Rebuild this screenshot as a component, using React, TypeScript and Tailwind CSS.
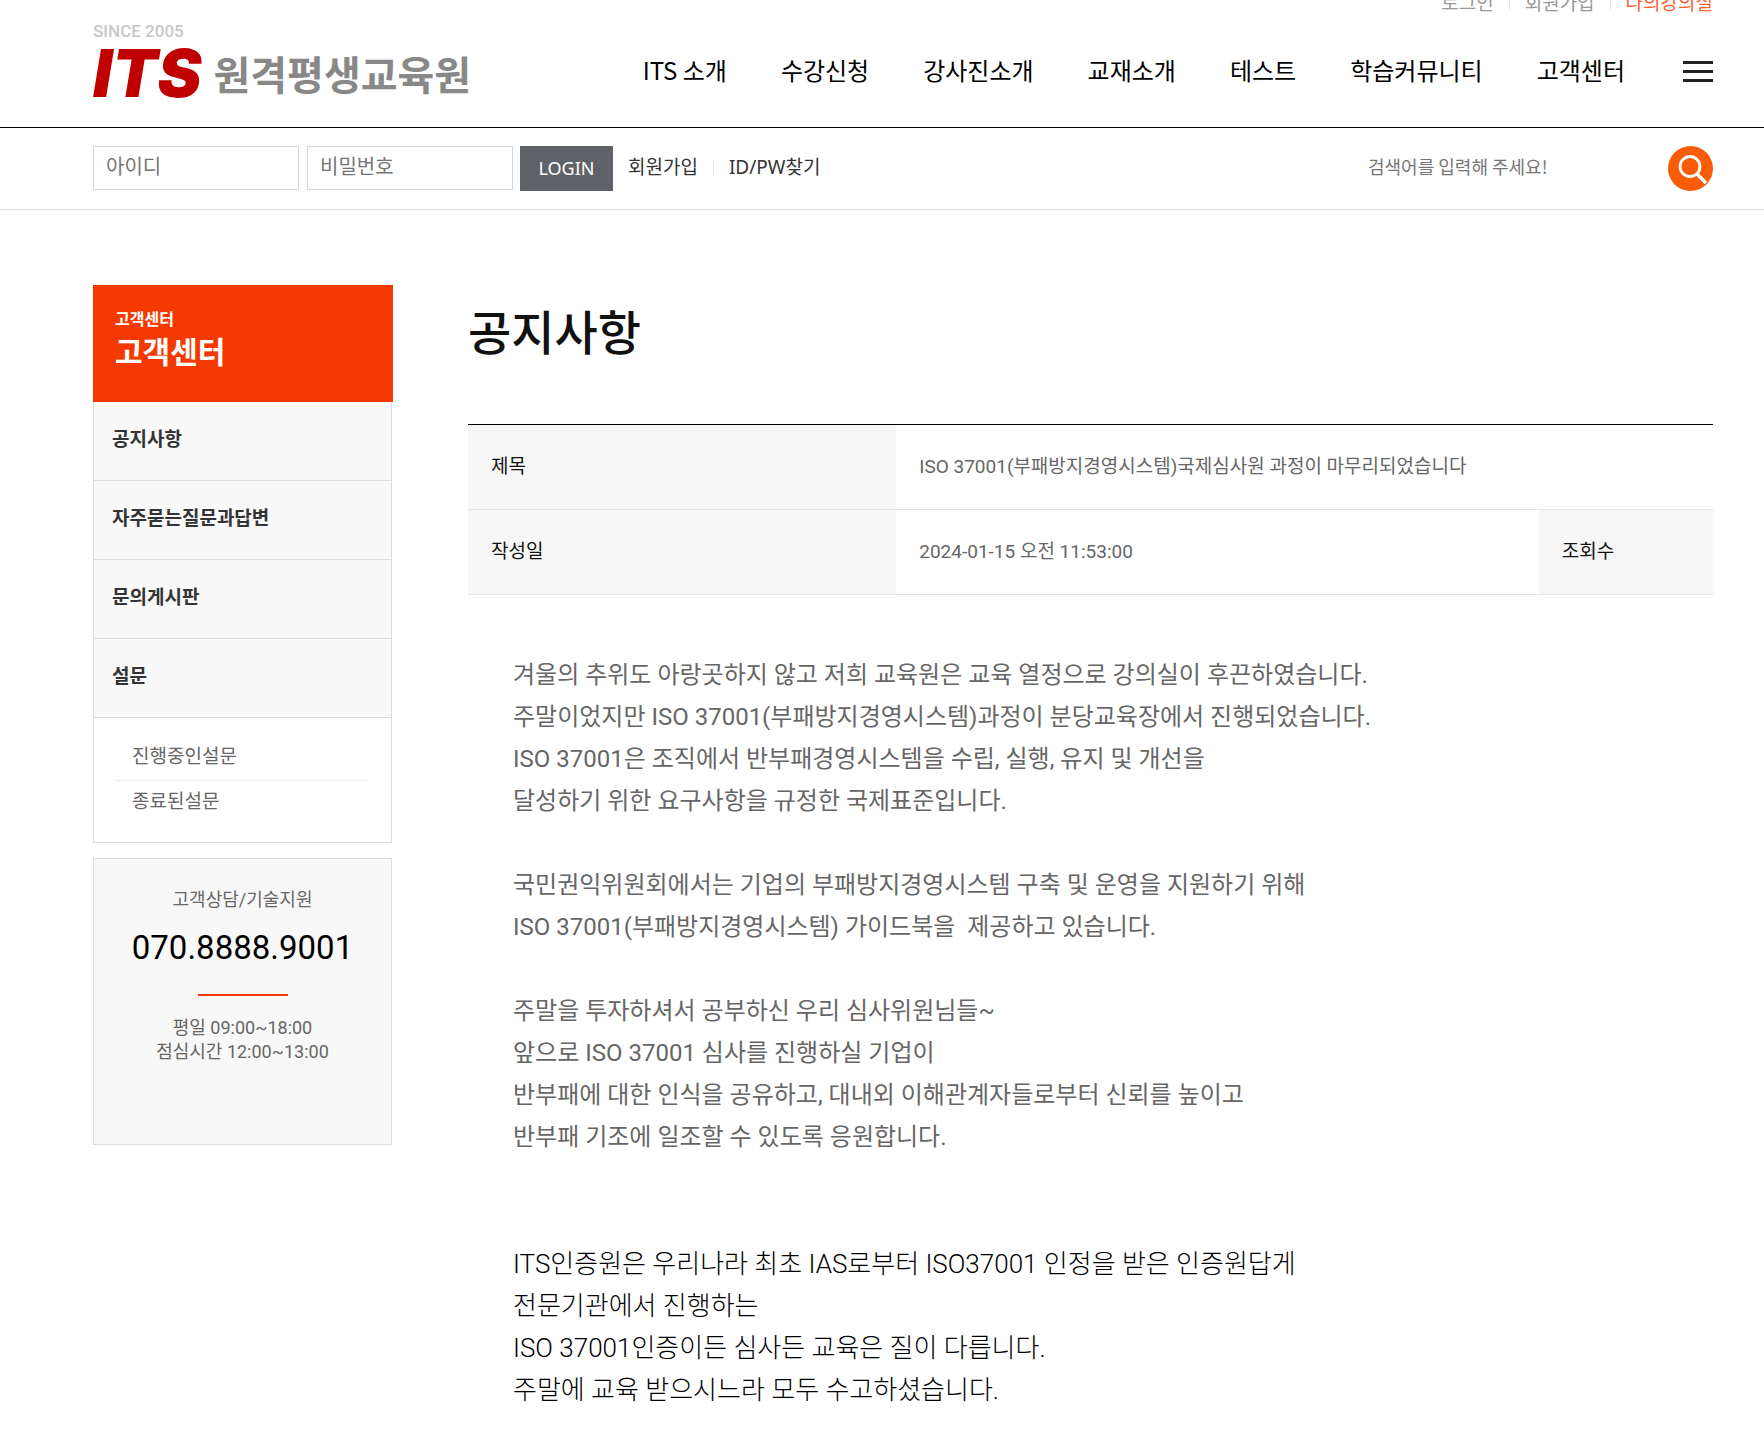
import { useState } from "react";

type BoardRow = {
  label: string
  value: string
}

const utilLinks = ["로그인", "회원가입"]

const menus = ["ITS 소개", "수강신청", "강사진소개", "교재소개", "테스트", "학습커뮤니티", "고객센터"]

const sideMenus = ["공지사항", "자주묻는질문과답변", "문의게시판", "설문"]

const surveyMenus = ["진행중인설문", "종료된설문"]

const title: BoardRow = { label: "제목", value: "ISO 37001(부패방지경영시스템)국제심사원 과정이 마무리되었습니다" }
const createdAt: BoardRow = { label: "작성일", value: "2024-01-15 오전 11:53:00" }

const article = `겨울의 추위도 아랑곳하지 않고 저희 교육원은 교육 열정으로 강의실이 후끈하였습니다.
주말이었지만 ISO 37001(부패방지경영시스템)과정이 분당교육장에서 진행되었습니다.
ISO 37001은 조직에서 반부패경영시스템을 수립, 실행, 유지 및 개선을
달성하기 위한 요구사항을 규정한 국제표준입니다.

국민권익위원회에서는 기업의 부패방지경영시스템 구축 및 운영을 지원하기 위해
ISO 37001(부패방지경영시스템) 가이드북을  제공하고 있습니다.

주말을 투자하셔서 공부하신 우리 심사위원님들~
앞으로 ISO 37001 심사를 진행하실 기업이
반부패에 대한 인식을 공유하고, 대내외 이해관계자들로부터 신뢰를 높이고
반부패 기조에 일조할 수 있도록 응원합니다.`

const closing = `ITS인증원은 우리나라 최초 IAS로부터 ISO37001 인정을 받은 인증원답게
전문기관에서 진행하는
ISO 37001인증이든 심사든 교육은 질이 다릅니다.
주말에 교육 받으시느라 모두 수고하셨습니다.`

const Header = () => {
  return (
    <header className="flex h-32 flex-col border-b border-black pl-[93px] pr-[51px] font-['Noto_Sans_CJK_KR',sans-serif]">
      <div className="-mt-3 flex h-7 shrink-0 items-center justify-end text-[19px] leading-7 text-[#999]">
        {utilLinks.map((link) => (
          <a key={link} href="#" className="mr-[15px] flex items-center gap-[15px] whitespace-nowrap">
            {link}
            <span className="h-4 w-px bg-[#e5e5e5]" />
          </a>
        ))}
        <a href="#" className="whitespace-nowrap text-[#ff5c33]">나의강의실</a>
      </div>
      <div className="flex grow items-center justify-between">
        <a href="#" className="flex flex-col whitespace-nowrap pb-6">
          <span className="mb-1.5 font-['Roboto',sans-serif] text-[17px] font-medium leading-5 text-[#c8c8c8]">SINCE 2005</span>
          <span className="flex items-center gap-3">
            <span className="font-['Inter',sans-serif] text-[66px] font-black italic leading-[52px] text-[#c00000]">ITS</span>
            <span className="text-[40px] font-bold leading-[52px] text-[#888]">원격평생교육원</span>
          </span>
        </a>
        <div className="flex items-center gap-[58px]">
          <nav className="flex gap-[54px] pb-1 text-2xl leading-9 text-black">
            {menus.map((menu) => (
              <a key={menu} href="#" className="whitespace-nowrap">{menu}</a>
            ))}
          </nav>
          <button type="button" aria-label="전체메뉴" className="flex w-[30px] flex-col gap-1.5">
            <span className="h-[3px] w-full bg-[#222]" />
            <span className="h-[3px] w-full bg-[#222]" />
            <span className="h-[3px] w-full bg-[#222]" />
          </button>
        </div>
      </div>
    </header>
  )
}

const LoginBar = () => {
  const [loginData, setLoginData] = useState({ id: "", password: "" })
  const [keyword, setKeyword] = useState("")

  const handleInputChange = (e: React.ChangeEvent<HTMLInputElement>) => {
    const { name, value } = e.target
    setLoginData({
      ...loginData,
      [name]: value
    })
  }

  return (
    <div className="flex items-start justify-between border-b border-[#ddd] pb-[18px] pl-[93px] pr-[51px] pt-[18px] font-['Noto_Sans_CJK_KR',sans-serif]">
      <form className="flex items-start" onSubmit={(e) => e.preventDefault()}>
        <input
          type="text"
          name="id"
          aria-label="아이디"
          value={loginData.id}
          onChange={handleInputChange}
          placeholder="아이디"
          className="mr-2 h-11 w-[206px] border border-[#d0d5e2] px-3 pb-1.5 text-xl outline-none placeholder:text-[#757575]"
        />
        <input
          type="password"
          name="password"
          aria-label="비밀번호"
          value={loginData.password}
          onChange={handleInputChange}
          placeholder="비밀번호"
          className="mr-[7px] h-11 w-[206px] border border-[#d0d5e2] px-3 pb-1.5 text-xl outline-none placeholder:text-[#757575]"
        />
        <button type="submit" className="h-[45px] w-[93px] bg-[#5f6367] pb-0.5 font-['Noto_Sans',sans-serif] text-lg text-white">
          LOGIN
        </button>
        <div className="ml-[15px] flex h-[42px] items-center gap-[15px] font-['Noto_Sans','Noto_Sans_CJK_KR',sans-serif] text-[19px] text-[#333]">
          <a href="#">회원가입</a>
          <span className="h-3.5 w-px bg-[#e5e5ee]" />
          <a href="#">ID/PW찾기</a>
        </div>
      </form>
      <form className="flex items-start" onSubmit={(e) => e.preventDefault()}>
        <input
          type="text"
          aria-label="검색어"
          value={keyword}
          onChange={(e) => setKeyword(e.target.value)}
          placeholder="검색어를 입력해 주세요!"
          className="h-10 w-[300px] text-lg outline-none placeholder:text-[#757575]"
        />
        <button type="submit" aria-label="검색" className="size-[45px]">
          <svg viewBox="0 0 45 45" className="size-full" fill="none">
            <circle cx="22.5" cy="22.5" r="22.5" fill="#f95c06" />
            <circle cx="22" cy="20.5" r="10" stroke="#fff" strokeWidth="2.8" />
            <path d="M29 28L38 37" stroke="#fff" strokeWidth="3.5" />
          </svg>
        </button>
      </form>
    </div>
  )
}

const Sidebar = () => {
  return (
    <aside className="w-[300px] shrink-0 font-['Noto_Sans_CJK_KR',sans-serif]">
      <div className="h-[117px] bg-[#f43a00] px-[22px] pt-[23px] font-bold text-white">
        <p className="text-base leading-5">고객센터</p>
        <h2 className="text-3xl leading-[44px]">고객센터</h2>
      </div>
      <div className="mr-px border-x border-b border-[#ddd]">
        {sideMenus.map((menu) => (
          <a
            key={menu}
            href="#"
            className="flex h-[79px] items-center border-b border-[#ddd] bg-[#f9f9f9] px-[18px] pb-1.5 text-[19px] font-bold text-[#333]"
          >
            {menu}
          </a>
        ))}
        <ul className="px-[23px] pb-[17px] pt-[18px] text-[19px] leading-[38px] text-[#666]">
          {surveyMenus.map((menu) => (
            <li key={menu} className="border-b border-dotted border-[#ddd] pb-1.5 pl-[15px] last:border-0">
              <a href="#">{menu}</a>
            </li>
          ))}
        </ul>
      </div>
      <div className="mr-px mt-[15px] flex h-[287px] flex-col items-center border border-[#ddd] bg-[#f8f8f8] pt-[29px] font-['Roboto','Noto_Sans_CJK_KR',sans-serif] text-lg leading-6 text-[#666]">
        <p>고객상담/기술지원</p>
        <strong className="mt-3 text-[33px] font-normal leading-[48px] text-black">070.8888.9001</strong>
        <span className="mb-5 mt-[22px] h-0.5 w-[90px] shrink-0 bg-[#f43a00]" />
        <p>평일 09:00~18:00</p>
        <p>점심시간 12:00~13:00</p>
      </div>
    </aside>
  )
}

const Notice = () => {
  return (
    <main className="grow">
      <h1 className="pt-[9px] font-['Noto_Sans_CJK_KR',sans-serif] text-[47px] font-medium leading-[72px] text-[#111]">공지사항</h1>
      <div className="mt-[58px] border-t border-black">
        <table className="w-full table-fixed border-collapse text-left text-[19px] leading-7">
          <colgroup>
            <col className="w-[34.4%]" />
            <col />
            <col className="w-[14%]" />
          </colgroup>
          <tbody>
            <tr className="h-[84px] border-b border-[#e5e5e5]">
              <th className="bg-[#f7f7f7] px-[23px] font-normal text-[#111]">{title.label}</th>
              <td colSpan={2} className="px-[23px] text-[#666]">{title.value}</td>
            </tr>
            <tr className="h-[85px] border-b border-[#e5e5e5]">
              <th className="bg-[#f7f7f7] px-[23px] font-normal text-[#111]">{createdAt.label}</th>
              <td className="px-[23px] text-[#666]">{createdAt.value}</td>
              <th className="bg-[#f7f7f7] px-[23px] font-normal text-[#111]">조회수</th>
            </tr>
          </tbody>
        </table>
      </div>
      <div className="whitespace-pre-wrap px-[45px] pt-[59px] leading-[42px]">
        <p className="text-2xl leading-[42px] text-[#666]">{article}</p>
        <p className="mt-[85px] text-[26px] font-light leading-[42px] text-black">{closing}</p>
      </div>
    </main>
  )
}

const App = () => {
  return (
    <div className="min-h-screen bg-white font-['Roboto','Noto_Sans_CJK_KR',sans-serif]">
      <Header />
      <LoginBar />
      <div className="flex items-start gap-[75px] pb-6 pl-[93px] pr-[51px] pt-[75px]">
        <Sidebar />
        <Notice />
      </div>
    </div>
  );
}

export default App;
